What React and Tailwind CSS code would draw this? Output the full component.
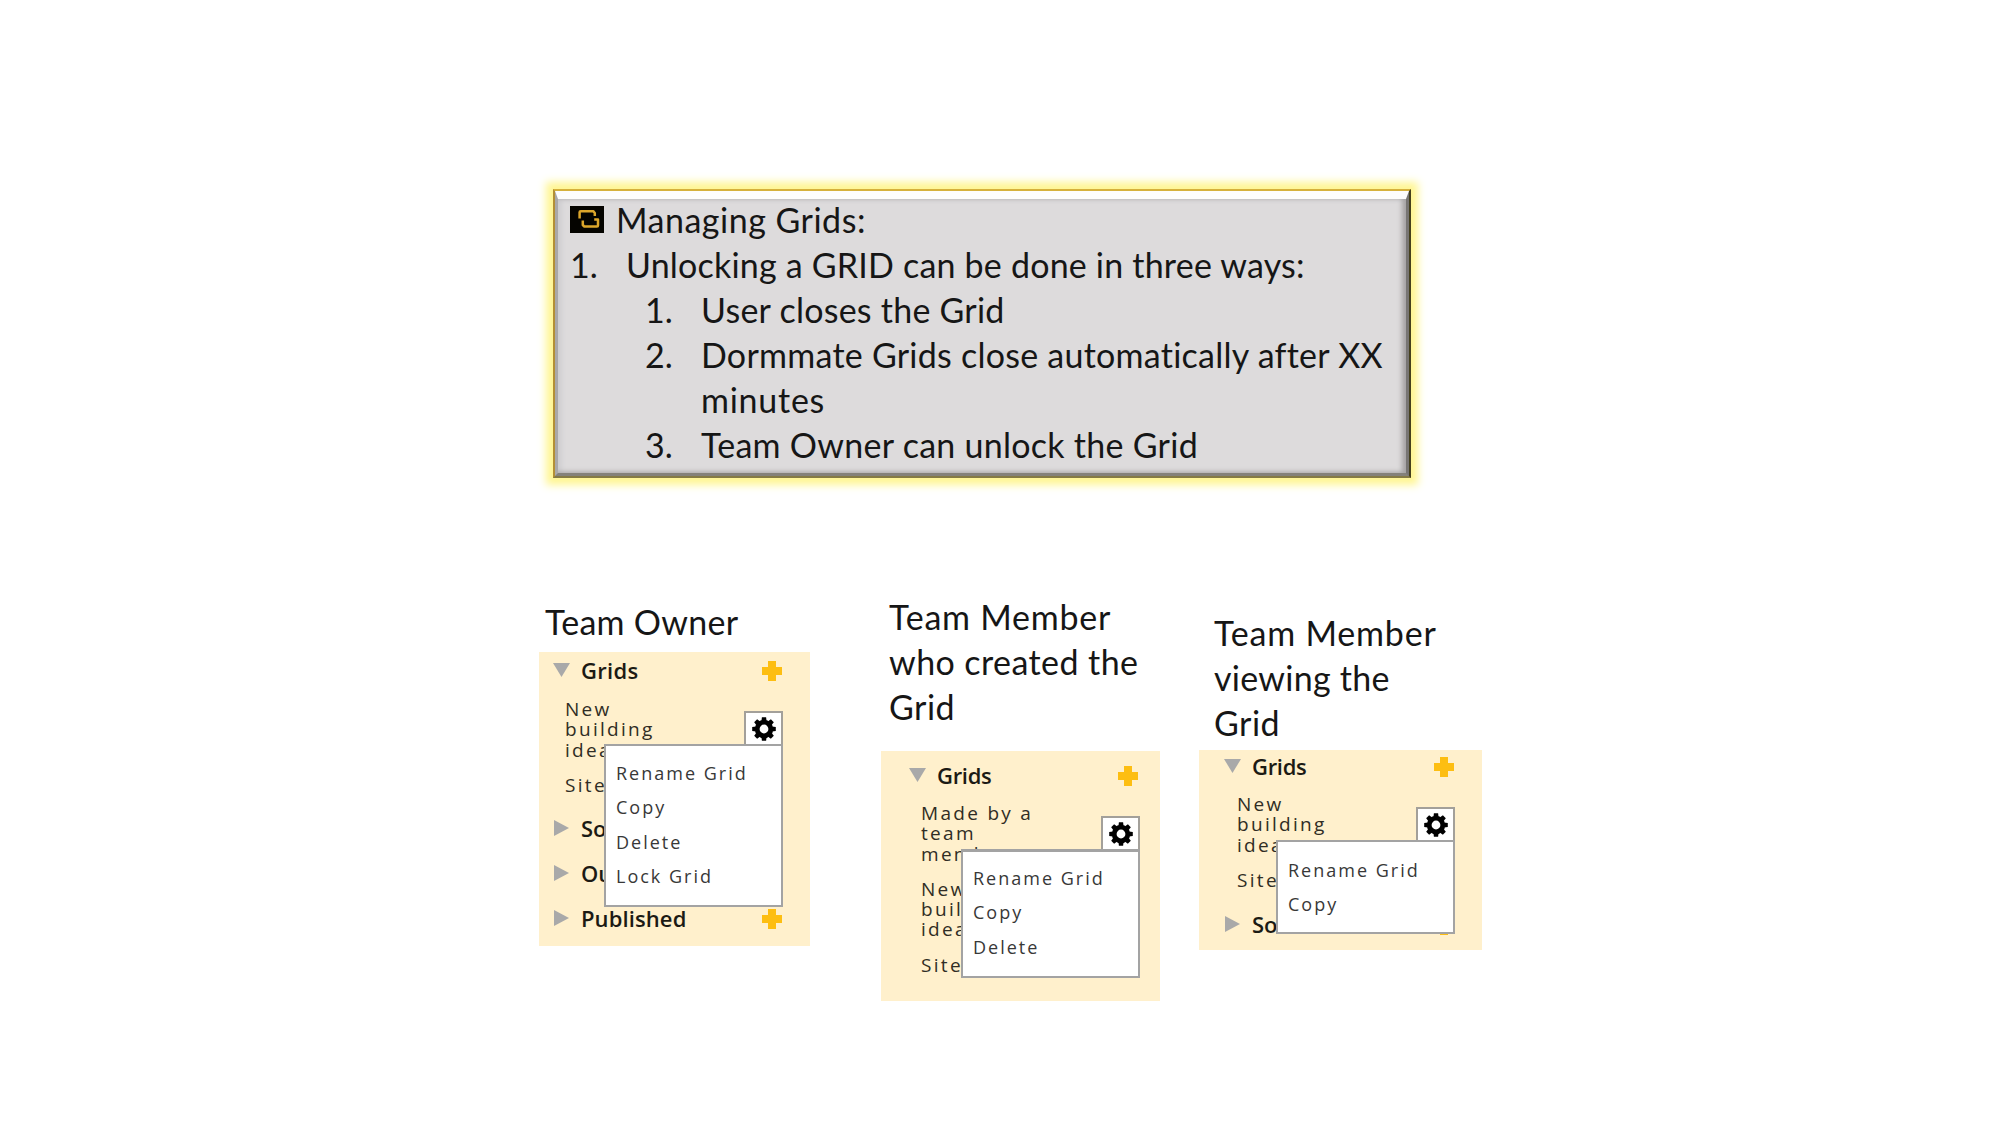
function Triangle({ open }) {
  return (
    <span className="flex h-4 w-[17px] shrink-0 items-center">
      {open ? (
        <svg className="h-[14px] w-[17px]" viewBox="0 0 17 14" fill="#a9a9a9">
          <path d="M0 0H17L8.5 14Z" />
        </svg>
      ) : (
        <svg className="ml-px h-4 w-[15px]" viewBox="0 0 15 16" fill="#a9a9a9">
          <path d="M0 0L15 8L0 16Z" />
        </svg>
      )}
    </span>
  );
}

function Plus() {
  return (
    <svg className="mt-px size-5 shrink-0" viewBox="0 0 20 20" fill="#fdbe12">
      <path d="M6 0H14V6H20V14H14V20H6V14H0V6H6Z" />
    </svg>
  );
}

function Gear() {
  const teeth = [0, 45, 90, 135, 180, 225, 270, 315];
  return (
    <svg className="size-6" viewBox="0 0 24 24">
      <circle cx="12" cy="12" r="6.8" fill="none" stroke="#000" strokeWidth="4.8" />
      {teeth.map((a) => (
        <path key={a} d="M9.4 4L9.9 0.2H14.1L14.6 4Z" transform={`rotate(${a} 12 12)`} />
      ))}
    </svg>
  );
}

function LoopIcon() {
  return (
    <svg className="h-[27px] w-[34px] shrink-0" viewBox="0 0 34 27">
      <rect width="34" height="27" fill="#050400" />
      <g fill="none" stroke="#dca62b" strokeWidth="2.5" strokeLinejoin="round">
        <path d="M9.6 12.5V6.3Q9.6 5.2 10.7 5.2H23.2L24.8 7V10" />
        <path d="M12.8 14.5V19L14.4 20.6H27Q28 20.6 28 19.6V13.5H24.2" />
      </g>
    </svg>
  );
}

function SectionRow({ label, open, plus, tracking = "", className = "" }) {
  return (
    <div className={`flex h-[30px] items-center ${className}`}>
      <Triangle open={open} />
      <span className={`ml-[11px] grow text-[22px] leading-[30px] font-semibold text-[#1c1a14] ${tracking}`}>{label}</span>
      {plus && <Plus />}
    </div>
  );
}

function Item({ lines, className = "" }) {
  return (
    <div className={`text-[19px] leading-[20.3px] tracking-[2.3px] text-[#302d24] ${className}`}>
      {lines.map((l) => (
        <div key={l}>{l}</div>
      ))}
    </div>
  );
}

function Menu({ items, className, bodyClass }) {
  return (
    <div className={`absolute flex w-[179px] flex-col items-end ${className}`}>
      <div className="flex h-[33px] w-[39px] items-center justify-center border-2 border-b-0 border-[#a3a09a] bg-white">
        <Gear />
      </div>
      <div className={`w-full border-2 border-[#a3a3a3] bg-white pl-[10px] text-[18px] leading-[34.4px] text-[#383838] ${bodyClass}`}>
        {items.map((l) => (
          <div key={l} className="tracking-[2px]">{l}</div>
        ))}
      </div>
    </div>
  );
}

export default function App() {
  return (
    <main className="h-[1125px] w-[2000px] overflow-hidden bg-white font-['Open_Sans',sans-serif]">
      <div className="flex h-[593px] pt-[189px] pl-[553px]">
        <section className="h-[289px] w-[858px] border-2 border-t-[#d6b13c] border-r-[#45401d] border-b-[#857a45] border-l-[#b38f35] bg-[#dddbdc] shadow-[0_0_8px_7px_#fff692]">
          <div className="h-full w-full border-t-[8px] border-r-[3px] border-b-[3px] border-l-[3px] border-t-[#fdfdfd] border-r-[#777573] border-b-[#84817a] border-l-[#aaa8a8] shadow-[inset_-4px_-1px_5px_#a5a3a3,inset_4px_1px_4px_#d0cfd2]">
            <div className="-mt-[2px] pl-[12px] font-['Lato',sans-serif] text-[34px] leading-[45px] whitespace-nowrap text-[#161616]">
              <div className="flex items-center">
                <LoopIcon />
                <span className="ml-[12px] tracking-[0.5px]">Managing Grids:</span>
              </div>
              <div className="flex">
                <span className="w-[56px]">1.</span>
                <span className="tracking-[0.2px]">Unlocking a GRID can be done in three ways:</span>
              </div>
              <div className="flex pl-[75px]">
                <span className="w-[56px]">1.</span>
                <span className="tracking-[0.24px]">User closes the Grid</span>
              </div>
              <div className="flex pl-[75px]">
                <span className="w-[56px]">2.</span>
                <span>
                  <span className="block tracking-[0.25px]">Dormmate Grids close automatically after XX</span>
                  <span className="block tracking-[0.75px]">minutes</span>
                </span>
              </div>
              <div className="flex pl-[75px]">
                <span className="w-[56px]">3.</span>
                <span className="tracking-[0.27px]">Team Owner can unlock the Grid</span>
              </div>
            </div>
          </div>
        </section>
      </div>

      <div className="flex items-start pl-[539px]">
        <section className="mt-[6px] w-[271px]">
          <h2 className="h-[53px] pl-[6px] font-['Lato',sans-serif] text-[34px] leading-[45px] tracking-[0.26px] text-[#161616]">Team Owner</h2>
          <div className="relative h-[294px] bg-[#fff0cc] pt-[3px]">
            <SectionRow label="Grids" open plus tracking="tracking-[0.3px]" className="pr-[28px] pl-[14px]" />
            <Item lines={["New", "building", "idea"]} className="mt-[14px] pl-[26px]" />
            <Item lines={["Site"]} className="mt-[15px] pl-[26px]" />
            <SectionRow label="So" className="mt-[18px] pr-[28px] pl-[14px]" />
            <SectionRow label="Ou" className="mt-[15px] pr-[28px] pl-[14px]" />
            <SectionRow label="Published" plus tracking="tracking-[0.1px]" className="mt-[15px] pr-[28px] pl-[14px]" />
            <Menu items={["Rename Grid", "Copy", "Delete", "Lock Grid"]} className="top-[59px] left-[65px]" bodyClass="h-[163px] pt-[10px]" />
          </div>
        </section>

        <section className="mt-px ml-[71px] w-[279px]">
          <h2 className="h-[157px] pl-[8px] font-['Lato',sans-serif] text-[34px] leading-[45px] text-[#161616]">
            <span className="block tracking-[0.75px]">Team Member</span>
            <span className="block tracking-[0.42px]">who created the</span>
            <span className="block tracking-[0.47px]">Grid</span>
          </h2>
          <div className="relative h-[250px] bg-[#fff0cc] pt-[9px]">
            <SectionRow label="Grids" open plus tracking="tracking-[-0.3px]" className="pr-[22px] pl-[28px]" />
            <Item lines={["Made by a", "team", "member"]} className="mt-[13px] pl-[40px]" />
            <Item lines={["New", "building", "idea"]} className="mt-[15px] pl-[40px]" />
            <Item lines={["Site"]} className="mt-[15px] pl-[40px]" />
            <Menu items={["Rename Grid", "Copy", "Delete"]} className="top-[65px] left-[80px]" bodyClass="h-[129px] border-t-[3px] pt-[9px]" />
          </div>
        </section>

        <section className="mt-[17px] ml-[39px] w-[283px]">
          <h2 className="h-[140px] pl-[15px] font-['Lato',sans-serif] text-[34px] leading-[45px] text-[#161616]">
            <span className="block tracking-[0.8px]">Team Member</span>
            <span className="block tracking-[0.26px]">viewing the</span>
            <span className="block tracking-[0.47px]">Grid</span>
          </h2>
          <div className="relative h-[200px] bg-[#fff0cc] pt-[1px]">
            <SectionRow label="Grids" open plus tracking="tracking-[-0.3px]" className="pr-[28px] pl-[25px]" />
            <Item lines={["New", "building", "idea"]} className="mt-[13px] pl-[38px]" />
            <Item lines={["Site"]} className="mt-[15px] pl-[38px]" />
            <SectionRow label="So" plus className="mt-[19px] pr-[28px] pl-[25px]" />
            <Menu items={["Rename Grid", "Copy"]} className="top-[57px] left-[77px]" bodyClass="h-[94px] pt-[11px]" />
          </div>
        </section>
      </div>
    </main>
  );
}
